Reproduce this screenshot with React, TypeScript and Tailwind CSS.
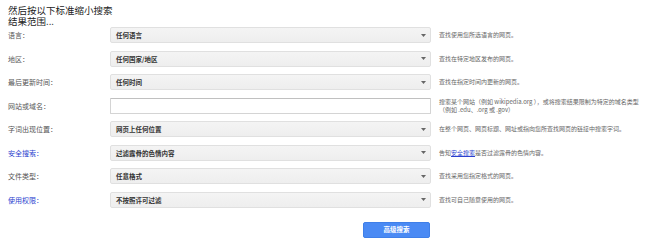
import React from "react";

const font = { fontFamily: '"Noto Sans CJK SC", "Noto Sans", sans-serif' };

type Row = {
  label: string;
  link?: boolean;
  value?: string;
  input?: boolean;
  desc: React.ReactNode;
};

const rows: Row[] = [
  { label: "语言：", value: "任何语言", desc: "查找使用您所选语言的网页。" },
  { label: "地区：", value: "任何国家/地区", desc: "查找在特定地区发布的网页。" },
  { label: "最后更新时间：", value: "任何时间", desc: "查找在指定时间内更新的网页。" },
  {
    label: "网站或域名：",
    input: true,
    desc: "搜索某个网站（例如 wikipedia.org ），或将搜索结果限制为特定的域名类型（例如 .edu、.org 或 .gov）",
  },
  {
    label: "字词出现位置：",
    value: "网页上任何位置",
    desc: "在整个网页、网页标题、网址或指向您所查找网页的链接中搜索字词。",
  },
  {
    label: "安全搜索：",
    link: true,
    value: "过滤露骨的色情内容",
    desc: (
      <>
        告知<span className="text-[#2b3fcf] underline">安全搜索</span>是否过滤露骨的色情内容。
      </>
    ),
  },
  { label: "文件类型：", value: "任意格式", desc: "查找采用您指定格式的网页。" },
  { label: "使用权限：", link: true, value: "不按照许可过滤", desc: "查找可自己随意使用的网页。" },
];

function Arrow() {
  return (
    <svg width="5" height="3" viewBox="0 0 5 3" className="shrink-0">
      <path d="M0 0 L5 0 L2.5 3 Z" fill="#666" />
    </svg>
  );
}

export default function App() {
  return (
    <div className="w-[650px] h-[244px] bg-white overflow-hidden pl-[8px] pt-[5px]" style={font}>
      <div className="text-[9.5px] leading-[11px] text-[#222]">
        <div>然后按以下标准缩小搜索</div>
        <div>结果范围...</div>
      </div>
      <div className="flex flex-col gap-[7.57px]">
        {rows.map((r, i) => (
          <div key={i} className="flex items-center h-[16px]">
            <div
              className={`w-[102px] shrink-0 text-[7px] leading-[16px] ${
                r.link ? "text-[#2b3fcf]" : "text-[#555]"
              }`}
            >
              {r.label}
            </div>
            {r.input ? (
              <div className="w-[321px] h-[16px] shrink-0 bg-white border border-[#d4d4d4] border-t-[#c0c0c0] rounded-[1px]" />
            ) : (
              <div className="w-[321px] h-[16px] shrink-0 flex items-center justify-between pl-[5px] pr-[4px] bg-gradient-to-b from-[#f4f4f4] to-[#eeeeee] border border-[#e0e0e0] rounded-[2px]">
                <span className="text-[6.5px] font-bold text-[#333] leading-[14px]">{r.value}</span>
                <Arrow />
              </div>
            )}
            <div className="ml-[8px] w-[206px] text-[6px] leading-[8px] text-[#666]">{r.desc}</div>
          </div>
        ))}
      </div>
      <div className="flex mt-[14px]">
        <div className="w-[102px] shrink-0" />
        <div className="w-[320px] flex justify-end">
          <div className="w-[67px] h-[16px] bg-[#4a8af4] border border-[#3f7fe8] rounded-[2px] flex items-center justify-center text-white text-[6.5px] font-bold">
            高级搜索
          </div>
        </div>
      </div>
    </div>
  );
}
